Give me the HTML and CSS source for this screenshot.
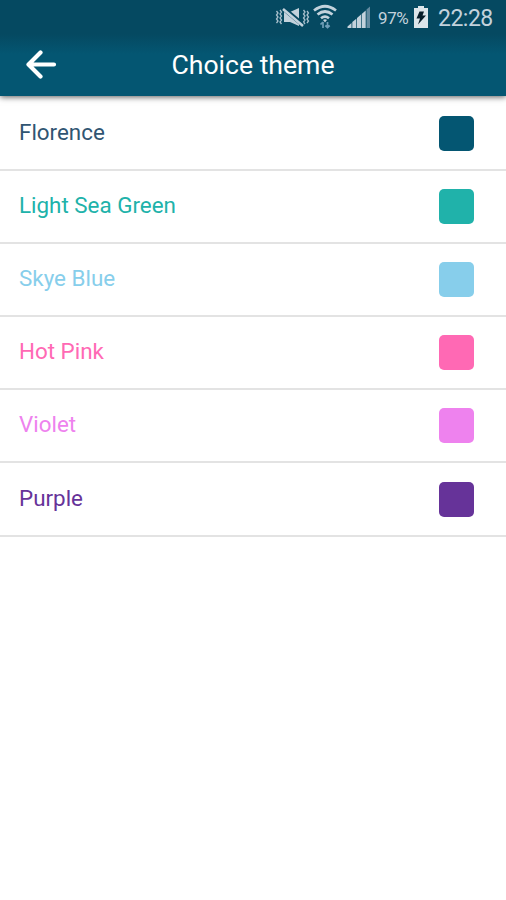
FILE: index.html
```html
<!DOCTYPE html>
<html lang="en">
<head>
<meta charset="utf-8">
<title>Choice theme</title>
<link rel="stylesheet" href="styles.css">
</head>
<body>
<header class="header">
  <div class="status">
    <svg class="status-icons" width="98" height="36" viewBox="0 0 98 36" aria-hidden="true">
      <path fill="none" stroke="#a9c0cd" stroke-width="1.300" d="M2.500 11l1.500 2-1.500 2 1.500 2-1.500 2 1.500 2-1.500 2M6 10l1.500 2L6 14l1.500 2L6 18l1.500 2L6 22l1.500 2M29.500 10l1.500 2-1.500 2 1.500 2-1.500 2 1.500 2-1.500 2 1.500 2M33 11l1.500 2-1.500 2 1.500 2-1.500 2 1.500 2-1.500 2"/>
      <path fill="#c3d2dc" d="M10 12h6l9-4v18L16 22h-6z"/>
      <path stroke="#064760" stroke-width="4.600" d="M9 8l19 16"/>
      <path stroke="#c3d2dc" stroke-width="2.600" d="M9 9l20 17"/>
      <path fill="none" stroke="#c3d2dc" stroke-width="2.700" d="M40 10.500q11-8.500 22 0M43.500 14.500q7.500-6 15 0M47 18.300q4-3.200 8 0"/>
      <path fill="#c3d2dc" d="M49 20q2-1.500 4 0l-2 2.500z"/>
      <path fill="none" stroke="#6f9db7" stroke-width="1.700" d="M49 28v-6m-2.500 2.500L49 22M53.500 22v6m-2.200-2.500l2.200 2 2.200-2"/>
      <path fill="#c3d2dc" d="M73.500 28v-1.500l4-3.500v5zM78.300 28v-6l4-3.300V28zM83 28V18l4-3.500V28zM87.700 28V14l4-3.500V28z"/>
      <path fill="#638ba0" d="M92.500 28V9.500L96 6.500V28z"/>
    </svg>
    <span class="percent">97%</span>
    <svg class="battery" width="16" height="24" viewBox="0 0 16 24" aria-hidden="true">
      <path fill="#dce5ea" d="M1 3h4V1h6v2h4v20H1z"/>
      <path fill="#071d29" d="M6.500 6.500H11l-1.500 4H13L5 19.500l2-6H3.500z"/>
    </svg>
    <time class="clock">22:28</time>
  </div>
  <div class="toolbar">
    <svg class="back" width="32" height="30" viewBox="0 0 32 30" role="img" aria-label="Back">
      <path d="M29 14.500H4M15.500 2.500L3.500 14.500l12 12" fill="none" stroke="#fff" stroke-width="4.200" stroke-linecap="round" stroke-linejoin="round"/>
    </svg>
    <h1 class="title">Choice theme</h1>
  </div>
</header>
<ul class="themes">
  <li class="theme florence"><span class="name">Florence</span><i class="swatch"></i></li>
  <li class="theme sea-green"><span class="name">Light Sea Green</span><i class="swatch"></i></li>
  <li class="theme sky-blue"><span class="name">Skye Blue</span><i class="swatch"></i></li>
  <li class="theme hot-pink"><span class="name">Hot Pink</span><i class="swatch"></i></li>
  <li class="theme violet"><span class="name">Violet</span><i class="swatch"></i></li>
  <li class="theme purple"><span class="name">Purple</span><i class="swatch"></i></li>
</ul>
</body>
</html>
```
FILE: styles.css
```css
* { box-sizing: border-box; }

body {
  margin: 0;
  min-height: 900px;
  background: #fff;
  font-family: Roboto, sans-serif;
}

.header {
  height: 96px;
  background: linear-gradient(#054961 0, #054961 34px, #045672 54px, #045672 100%);
  box-shadow: 0 1px 6px rgba(0, 0, 0, .65);
}

.status {
  display: flex;
  align-items: center;
  height: 36px;
  padding-left: 274px;
  color: #c3d2dc;
  white-space: nowrap;
}

.status-icons { flex: none; }

.percent {
  width: 32px;
  margin-left: 6px;
  font-size: 17px;
  letter-spacing: -.4px;
}

.battery {
  flex: none;
  margin: -2px 0 0 3px;
}

.clock {
  margin-left: 9px;
  font-size: 23px;
  letter-spacing: -.5px;
}

.toolbar {
  display: grid;
  grid-template-columns: 60px 1fr 60px;
  align-items: center;
  height: 58px;
}

.back { margin-left: 25px; }

.title {
  margin: 0;
  padding-bottom: 2px;
  color: #fff;
  font-size: 26.600px;
  font-weight: 400;
  text-align: center;
}

.themes {
  margin: 0;
  padding: 2px 0 0;
  list-style: none;
}

.theme {
  display: flex;
  align-items: center;
  justify-content: space-between;
  height: 73.100px;
  padding: 0 32px 0 19px;
  border-bottom: 2px solid #e3e3e3;
  color: var(--theme);
}

.name {
  padding-bottom: 3px;
  font-size: 22.400px;
  line-height: 28px;
}

.swatch {
  width: 35px;
  height: 35px;
  border-radius: 5px;
  background: var(--swatch, var(--theme));
}

.florence { --theme: #305572; --swatch: #045672; }
.sea-green { --theme: #20b2aa; }
.sky-blue { --theme: #87ceeb; }
.hot-pink { --theme: #ff69b4; }
.violet { --theme: #ee82ee; }
.purple { --theme: #663399; }
```
